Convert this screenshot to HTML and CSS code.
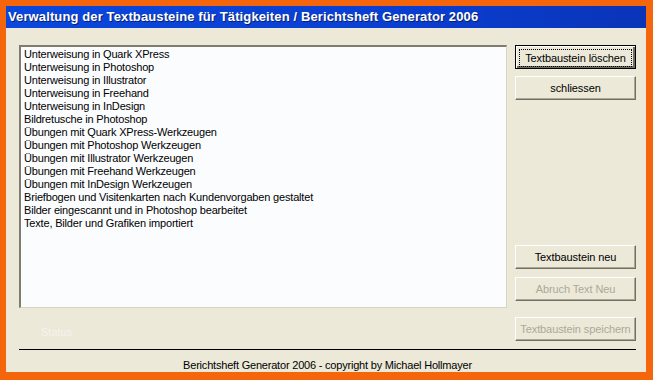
FILE: index.html
```html
<!DOCTYPE html>
<html lang="de">
<head>
    <meta charset="UTF-8">
    <title>Verwaltung der Textbausteine</title>
    <link rel="stylesheet" href="styles.css">
</head>
<body>
    <div class="window">
        <div class="titlebar">Verwaltung der Textbausteine für Tätigkeiten / Berichtsheft Generator 2006</div>
        <div class="content">
            <div class="main">
                <div class="left">
                    <ul class="listbox">
                        <li>Unterweisung in Quark XPress</li>
                        <li>Unterweisung in Photoshop</li>
                        <li>Unterweisung in Illustrator</li>
                        <li>Unterweisung in Freehand</li>
                        <li>Unterweisung in InDesign</li>
                        <li>Bildretusche in Photoshop</li>
                        <li>Übungen mit Quark XPress-Werkzeugen</li>
                        <li>Übungen mit Photoshop Werkzeugen</li>
                        <li>Übungen mit Illustrator Werkzeugen</li>
                        <li>Übungen mit Freehand Werkzeugen</li>
                        <li>Übungen mit InDesign Werkzeugen</li>
                        <li>Briefbogen und Visitenkarten nach Kundenvorgaben gestaltet</li>
                        <li>Bilder eingescannt und in Photoshop bearbeitet</li>
                        <li>Texte, Bilder und Grafiken importiert</li>
                    </ul>
                    <div class="status">Status</div>
                </div>
                <div class="buttons">
                    <button type="button" class="btn focused"><span>Textbaustein löschen</span></button>
                    <button type="button" class="btn b-close">schliessen</button>
                    <button type="button" class="btn b-new">Textbaustein neu</button>
                    <button type="button" class="btn b-cancel" disabled>Abruch Text Neu</button>
                    <button type="button" class="btn b-save" disabled>Textbaustein speichern</button>
                </div>
            </div>
            <div class="separator"></div>
            <div class="footer">Berichtsheft Generator 2006 - copyright by Michael Hollmayer</div>
        </div>
    </div>
</body>
</html>
```

FILE: styles.css
```css
body{
    margin:0;
    background-color:#f5650c;
    font-family:"Liberation Sans", Arial, sans-serif;
}
div.window{
    width:640px;
    height:366px;
    margin:6px 0 0 6px;
    background-color:#ece9d8;
    display:flex;
    flex-direction:column;
}
div.titlebar{
    height:22px;
    line-height:22px;
    padding-left:2px;
    background-image:linear-gradient(to right, #0b47dc, #0a3fd2 60%, #0a34b8);
    color:white;
    font-weight:bold;
    font-size:13px;
    letter-spacing:0.12px;
    text-shadow:1px 1px 0 #0a1f6a;
    white-space:nowrap;
    overflow:hidden;
}
div.content{
    padding:17px 10px 0 13px;
}
div.main{
    display:flex;
    gap:8px;
    height:297px;
}
div.left{
    width:488px;
}
ul.listbox{
    list-style:none;
    margin:0;
    padding:1px 3px;
    height:263px;
    box-sizing:border-box;
    background-color:#fbfcfe;
    border-top:2px solid #7f7c70;
    border-left:2px solid #7f7c70;
    border-right:1px solid #d8d4c4;
    border-bottom:1px solid #d8d4c4;
    font-size:11px;
    line-height:13px;
    letter-spacing:-0.18px;
    color:#000;
}
div.status{
    margin:18px 0 0 22px;
    font-size:11px;
    color:#f6f4ec;
}
div.buttons{
    width:121px;
    display:flex;
    flex-direction:column;
}
button.btn{
    height:24px;
    width:121px;
    padding:0;
    background-color:#ece9d8;
    border:1px solid;
    border-color:#ffffff #716f64 #716f64 #ffffff;
    box-shadow:inset -1px -1px 0 #aca899;
    font-family:"Liberation Sans", Arial, sans-serif;
    font-size:11px;
    letter-spacing:-0.1px;
    color:#000;
}
button.focused{
    border:1px solid #000;
    box-shadow:inset 1px 1px 0 #fff, inset -2px -2px 0 #716f64;
}
button.focused span{
    display:block;
    margin:3px;
    padding:2px 0;
    border:1px dotted #000;
}
button.b-close{
    margin-top:7px;
}
button.b-new{
    margin-top:145px;
}
button.b-cancel{
    margin-top:8px;
}
button.b-save{
    margin-top:16px;
}
button.btn:disabled{
    color:#aca899;
}
div.separator{
    margin-top:7px;
    height:1px;
    background-color:#000;
}
div.footer{
    margin-top:8px;
    text-align:center;
    font-size:11px;
    line-height:14px;
    letter-spacing:-0.2px;
    color:#000;
}
```
